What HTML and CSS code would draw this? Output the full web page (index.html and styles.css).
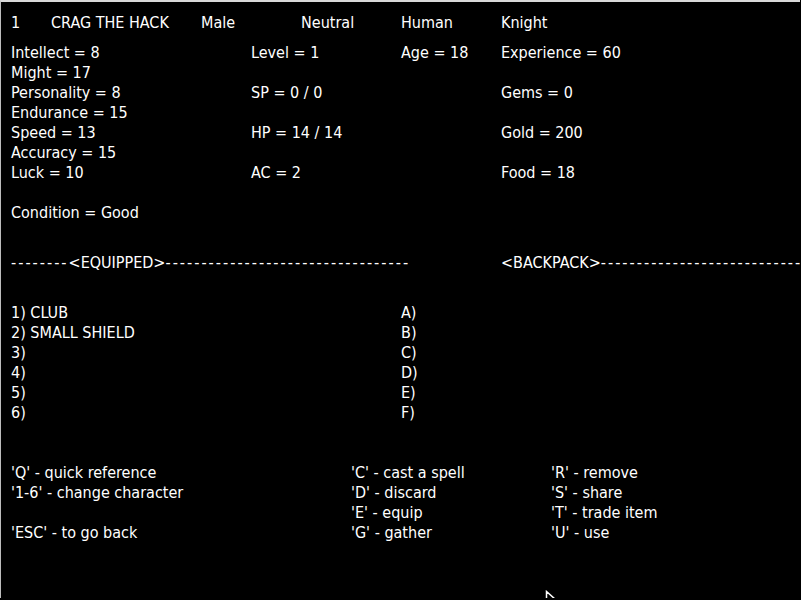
FILE: index.html
```html
<!DOCTYPE html>
<html>
<head>
<meta charset="utf-8">
<link rel="stylesheet" href="styles.css">
</head>
<body>
<div class="screen">
  <div class="row header">
    <span>1</span><span>CRAG THE HACK</span><span>Male</span><span>Neutral</span><span>Human</span><span>Knight</span>
  </div>
  <div class="stats">
    <div class="row st"><span>Intellect = 8</span><span>Level = 1</span><span>Age = 18</span><span>Experience = 60</span></div>
    <div class="row st"><span>Might = 17</span><span></span><span></span><span></span></div>
    <div class="row st"><span>Personality = 8</span><span>SP = 0 / 0</span><span></span><span>Gems = 0</span></div>
    <div class="row st"><span>Endurance = 15</span><span></span><span></span><span></span></div>
    <div class="row st"><span>Speed = 13</span><span>HP = 14 / 14</span><span></span><span>Gold = 200</span></div>
    <div class="row st"><span>Accuracy = 15</span><span></span><span></span><span></span></div>
    <div class="row st"><span>Luck = 10</span><span>AC = 2</span><span></span><span>Food = 18</span></div>
    <div class="row blank"></div>
    <div class="row"><span>Condition = Good</span></div>
  </div>
  <div class="row divider">
    <span><span class="dash">--------</span>&lt;EQUIPPED&gt;<span class="dash">----------------------------------</span></span><span>&lt;BACKPACK&gt;<span class="dash">------------------------------------</span></span>
  </div>
  <div class="items">
    <div class="row it"><span>1) CLUB</span><span>A)</span></div>
    <div class="row it"><span>2) SMALL SHIELD</span><span>B)</span></div>
    <div class="row it"><span>3)</span><span>C)</span></div>
    <div class="row it"><span>4)</span><span>D)</span></div>
    <div class="row it"><span>5)</span><span>E)</span></div>
    <div class="row it"><span>6)</span><span>F)</span></div>
  </div>
  <div class="cmds">
    <div class="row cm"><span>'Q' - quick reference</span><span>'C' - cast a spell</span><span>'R' - remove</span></div>
    <div class="row cm"><span>'1-6' - change character</span><span>'D' - discard</span><span>'S' - share</span></div>
    <div class="row cm"><span></span><span>'E' - equip</span><span>'T' - trade item</span></div>
    <div class="row cm"><span>'ESC' - to go back</span><span>'G' - gather</span><span>'U' - use</span></div>
  </div>
  <svg class="cursor" width="20" height="24" viewBox="0 0 20 24">
    <path d="M1.5 1.5 L1.5 19 L6 14.5 L9 21.5 L12 20 L9 13.5 L15 13.5 Z" fill="#000" stroke="#fff" stroke-width="1.5" stroke-linejoin="miter"/>
  </svg>
</div>
</body>
</html>
```
FILE: styles.css
```css
html, body {
  margin: 0;
  padding: 0;
  background: #000;
}
.screen {
  position: relative;
  width: 800px;
  height: 598px;
  overflow: hidden;
  border-top: 2px solid #d8d8d8;
  border-left: 1px solid #bdbdbd;
  background: #000;
  color: #fff;
  font-family: "DejaVu Sans Condensed", "DejaVu Sans", sans-serif;
  font-stretch: condensed;
  font-size: 16px;
  line-height: 20px;
  padding: 11px 0 0 10px;
  box-sizing: border-box;
}
.row {
  display: grid;
  height: 20px;
  white-space: pre;
}
.header {
  grid-template-columns: 40px 150px 100px 100px 100px auto;
}
.stats {
  margin-top: 10px;
}
.st {
  grid-template-columns: 240px 150px 100px auto;
}
.divider {
  margin-top: 30px;
  grid-template-columns: 490px 300px;
  overflow: hidden;
}
.divider > span {
  overflow: hidden;
}
.dash {
  letter-spacing: 2px;
}
.items {
  margin-top: 30px;
}
.it {
  grid-template-columns: 390px auto;
}
.cmds {
  margin-top: 40px;
}
.cm {
  grid-template-columns: 340px 200px auto;
}
.cursor {
  position: absolute;
  left: 544px;
  top: 588px;
}
```
